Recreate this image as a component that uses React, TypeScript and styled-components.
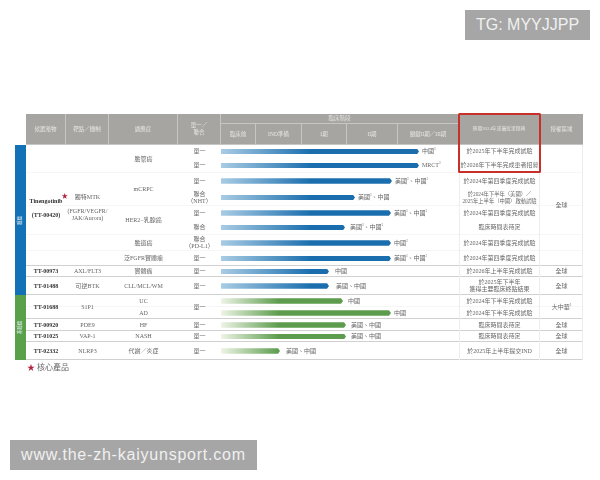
import styled, { createGlobalStyle } from "styled-components";

const GlobalStyle = createGlobalStyle`
  html, body {
    margin: 0;
    padding: 0;
    background: #fff;
  }
`;

const Page = styled.div`
  position: relative;
  width: 600px;
  height: 480px;
  overflow: hidden;
  padding: 114px 0 0 15px;
  box-sizing: border-box;
  font-family: "Liberation Serif", "Noto Sans CJK TC", serif;
  color: #666;
`;

const Blurred = styled.div`
  filter: blur(0.4px);
`;

const Table = styled.div`
  display: grid;
  width: 568px;
  grid-template-columns: 11px 40px 43px 69px 43px 35px 46px 45px 51px 61px 81px 43px;
  grid-template-rows: 10px 21px 13px 15px 16px 17px 14px 15px 16px 15px 11px 18px 12px 12px 12px 11px 18px;
  font-size: 6px;
  line-height: 6.8px;
`;

type PlaceProps = {
  $col: number;
  $row: number;
  $colSpan?: number;
  $rowSpan?: number;
};

const Cell = styled.div<PlaceProps>`
  grid-column: ${(p) => p.$col} / span ${(p) => p.$colSpan ?? 1};
  grid-row: ${(p) => p.$row} / span ${(p) => p.$rowSpan ?? 1};
  display: flex;
  flex-direction: column;
  align-items: center;
  justify-content: center;
  text-align: center;
  min-width: 0;
  white-space: nowrap;
  z-index: 1;
`;

const LeadCell = styled(Cell)`
  padding-top: 5px;
`;

const HeaderCell = styled(Cell)`
  background: #a6a5a2;
  color: #e6e6e4;
  font-size: 5.5px;
  border-right: 1px solid #c6c6c4;
  border-bottom: 1px solid #c6c6c4;
  box-sizing: border-box;
`;

const MilestoneHeader = styled(HeaderCell)`
  font-size: 4.8px;
`;

const HeaderEnd = styled(HeaderCell)`
  border-right: none;
`;

const Strip = styled(Cell)<{ $green?: boolean }>`
  background: ${(p) => (p.$green ? "#58a04a" : "#1272b5")};
  color: #dfeaf0;
  font-size: 4.5px;
`;

const StripLabel = styled.span`
  display: block;
  transform: rotate(-90deg);
`;

const DrugName = styled.div`
  position: relative;
  font-weight: 700;
  color: #333;
`;

const Gap = styled.div`
  height: 7px;
`;

const Star = styled.span`
  position: absolute;
  left: 100%;
  top: -6px;
  margin-left: -1px;
  color: #b3233c;
  font-size: 6.5px;
  line-height: 7px;
`;

const Sup = styled.sup`
  font-size: 3px;
  line-height: 0;
`;

const PlanLine = styled.div<{ $small?: boolean }>`
  font-size: ${(p) => (p.$small ? "5.3px" : "6px")};
`;

const BarCell = styled(Cell)`
  flex-direction: row;
  justify-content: flex-start;
`;

const Bar = styled.div<{ $green?: boolean; $width: number }>`
  width: ${(p) => p.$width}px;
  height: 5.5px;
  flex: none;
  clip-path: polygon(0 0, calc(100% - 2px) 0, 100% 50%, calc(100% - 2px) 100%, 0 100%);
  background: ${(p) =>
    p.$green
      ? "linear-gradient(90deg, #eef4e6 0, #5c9c4c 58px)"
      : "linear-gradient(90deg, #a9cce4 0, #1a6eae 90px)"};
`;

const BarLabel = styled.span<{ $gap?: number }>`
  margin-left: ${(p) => p.$gap ?? 3}px;
`;

const RowLine = styled.div<{ $row: number; $strong?: boolean }>`
  grid-column: 2 / span 11;
  grid-row: ${(p) => p.$row};
  align-self: end;
  height: ${(p) => (p.$strong ? "1.5px" : "1px")};
  background: ${(p) => (p.$strong ? "#d0d0d0" : "#f6f6f6")};
`;

const ColumnRule = styled.div`
  grid-column: 11;
  grid-row: 3 / span 15;
  border-left: 1px solid #ededed;
  border-right: 1px solid #ededed;
`;

const EdgeRule = styled.div`
  grid-column: 12;
  grid-row: 3 / span 15;
  border-right: 1px solid #ededed;
`;

const Highlight = styled.div`
  grid-column: 11;
  grid-row: 1 / span 4;
  margin: -1px -1px 0 -1px;
  border: 2px solid #c8302a;
  border-radius: 1.5px;
  z-index: 2;
`;

const Legend = styled.div`
  margin: 3px 0 0 12px;
  font-size: 8px;
  line-height: 10px;
  color: #666;
`;

const LegendStar = styled.span`
  color: #b3233c;
  margin-right: 2px;
`;

const Badge = styled.div`
  position: absolute;
  height: 30px;
  display: flex;
  align-items: center;
  justify-content: center;
  background: #a6a6a6;
  color: #f0f0f0;
  font-family: "Liberation Sans", Arial, sans-serif;
  font-size: 16px;
`;

const TgBadge = styled(Badge)`
  top: 10px;
  left: 465px;
  width: 125px;
`;

const SiteBadge = styled(Badge)`
  top: 440px;
  left: 10px;
  width: 247px;
  letter-spacing: 0.78px;
`;

const heads = [
  { col: 2, text: "候選藥物" },
  { col: 3, text: "靶點／機制" },
  { col: 4, text: "適應症" },
];

const phases = [
  { col: 6, text: "臨床前" },
  { col: 7, text: "IND準備" },
  { col: 8, text: "I期" },
  { col: 9, text: "II期" },
  { col: 10, text: "關鍵II期／III期" },
];

type Row = {
  mode: string[];
  bar: number;
  region: string;
  gap?: number;
  green?: boolean;
  small?: boolean;
  plan: string[];
};

const S = () => <Sup>3</Sup>;

const rows: (Row & { label?: React.ReactNode })[] = [
  { mode: ["單一"], bar: 198, region: "中國", label: <>中國<S /></>, plan: ["於2025年下半年完成試驗"] },
  { mode: ["單一"], bar: 198, region: "MRCT", label: <>MRCT<S /></>, plan: ["於2026年下半年完成患者招募"] },
  { mode: ["單一"], bar: 171, region: "", label: <>美國<S />、中國<S /></>, plan: ["於2024年第四季度完成試驗"] },
  { mode: ["聯合", "（NHT）"], bar: 134, region: "", label: <>美國<S />、中國</>, small: true, plan: ["於2024年下半年（美國）／", "2025年上半年（中國）啟動試驗"] },
  { mode: ["單一"], bar: 170, region: "", label: <>美國<S />、中國<S /></>, plan: ["於2024年第四季度完成試驗"] },
  { mode: ["聯合"], bar: 124, region: "", gap: 5, label: <>美國<S />、中國<S /></>, plan: ["臨床時間表待定"] },
  { mode: ["聯合", "（PD-L1）"], bar: 170, region: "", label: <>中國<S /></>, plan: ["於2024年第四季度完成試驗"] },
  { mode: ["單一"], bar: 170, region: "", label: <>美國<S />、中國<S /></>, plan: ["於2024年第四季度完成試驗"] },
  { mode: ["單一"], bar: 108, region: "中國", gap: 6, plan: ["於2026年上半年完成試驗"] },
  { mode: ["單一"], bar: 108, region: "美國、中國", gap: 7, plan: ["於2025年下半年", "獲得主要臨床終點結果"] },
  { mode: [], bar: 122, region: "中國", gap: 5, green: true, plan: ["於2024年下半年完成試驗"] },
  { mode: [], bar: 170, region: "中國", green: true, plan: ["於2024年下半年完成試驗"] },
  { mode: ["單一"], bar: 125, region: "美國、中國", gap: 5, green: true, plan: ["臨床時間表待定"] },
  { mode: ["單一"], bar: 125, region: "美國、中國", gap: 5, green: true, plan: ["臨床時間表待定"] },
  { mode: ["單一"], bar: 59, region: "美國、中國", gap: 6, green: true, plan: ["於2025年上半年提交IND"] },
];

const indications: { row: number; span: number; text: React.ReactNode }[] = [
  { row: 3, span: 2, text: <>膽管癌<S /></> },
  { row: 5, span: 2, text: "mCRPC" },
  { row: 7, span: 2, text: "HER2−乳腺癌" },
  { row: 9, span: 1, text: "膽道癌" },
  { row: 10, span: 1, text: "泛FGFR實體瘤" },
  { row: 11, span: 1, text: "實體瘤" },
  { row: 12, span: 1, text: "CLL/MCL/WM" },
  { row: 13, span: 1, text: "UC" },
  { row: 14, span: 1, text: "AD" },
  { row: 15, span: 1, text: "HF" },
  { row: 16, span: 1, text: "NASH" },
  { row: 17, span: 1, text: "代謝／炎症" },
];

const drugs = [
  { row: 11, span: 1, name: "TT-00973", target: "AXL/FLT3" },
  { row: 12, span: 1, name: "TT-01488", target: "可逆BTK" },
  { row: 13, span: 2, name: "TT-01688", target: "S1P1" },
  { row: 15, span: 1, name: "TT-00920", target: "PDE9" },
  { row: 16, span: 1, name: "TT-01025", target: "VAP-1" },
  { row: 17, span: 1, name: "TT-02332", target: "NLRP3" },
];

const rights = [
  { row: 3, span: 8, text: "全球" },
  { row: 11, span: 1, text: "全球" },
  { row: 12, span: 1, text: "全球" },
  { row: 15, span: 1, text: "全球" },
  { row: 16, span: 1, text: "全球" },
  { row: 17, span: 1, text: "全球" },
];

const strongRows = [10, 11, 12, 14, 15, 16, 17];
const faintRows = [4, 6, 8, 9, 13];

export default function App() {
  return (
    <Page>
      <GlobalStyle />
      <Blurred>
        <Table>
          {heads.map((h) => (
            <HeaderCell key={h.col} $col={h.col} $row={1} $rowSpan={2}>
              {h.text}
            </HeaderCell>
          ))}
          <HeaderCell $col={5} $row={1} $rowSpan={2}>
            <div>單一／</div>
            <div>聯合</div>
          </HeaderCell>
          <HeaderCell $col={6} $row={1} $colSpan={5}>
            臨床階段
          </HeaderCell>
          {phases.map((h) => (
            <HeaderCell key={h.col} $col={h.col} $row={2}>
              {h.text}
            </HeaderCell>
          ))}
          <MilestoneHeader $col={11} $row={1} $rowSpan={2}>
            預期2024年或最近里程碑
          </MilestoneHeader>
          <HeaderEnd $col={12} $row={1} $rowSpan={2}>
            授權區域
          </HeaderEnd>

          <Strip $col={1} $row={3} $rowSpan={10}>
            <StripLabel>腫瘤</StripLabel>
          </Strip>
          <Strip $col={1} $row={13} $rowSpan={5} $green>
            <StripLabel>非腫瘤</StripLabel>
          </Strip>

          <LeadCell $col={2} $row={3} $rowSpan={8}>
            <DrugName>
              Tinengotinib<Star>★</Star>
            </DrugName>
            <Gap />
            <DrugName>(TT-00420)</DrugName>
          </LeadCell>
          <LeadCell $col={3} $row={3} $rowSpan={8}>
            <div>獨特MTK</div>
            <Gap />
            <div>(FGFR/VEGFR/</div>
            <div>JAK/Aurora)</div>
          </LeadCell>

          {drugs.map((d) => (
            <Cell key={d.name} $col={2} $row={d.row} $rowSpan={d.span}>
              <DrugName>{d.name}</DrugName>
            </Cell>
          ))}
          {drugs.map((d) => (
            <Cell key={d.target} $col={3} $row={d.row} $rowSpan={d.span}>
              {d.target}
            </Cell>
          ))}
          {indications.map((d) => (
            <Cell key={d.row} $col={4} $row={d.row} $rowSpan={d.span}>
              {d.text}
            </Cell>
          ))}

          <Cell $col={5} $row={13} $rowSpan={2}>
            單一
          </Cell>
          {rows.map((r, i) => (
            <Cell key={`mode-${i}`} $col={5} $row={i + 3}>
              {r.mode.map((m) => (
                <div key={m}>{m}</div>
              ))}
            </Cell>
          ))}

          {rows.map((r, i) => (
            <BarCell key={`bar-${i}`} $col={6} $colSpan={5} $row={i + 3}>
              <Bar $width={r.bar} $green={r.green} />
              <BarLabel $gap={r.gap}>{r.label ?? r.region}</BarLabel>
            </BarCell>
          ))}

          {rows.map((r, i) => (
            <Cell key={`plan-${i}`} $col={11} $row={i + 3}>
              {r.plan.map((p) => (
                <PlanLine key={p} $small={r.small}>
                  {p}
                </PlanLine>
              ))}
            </Cell>
          ))}

          {rights.map((d) => (
            <Cell key={d.row} $col={12} $row={d.row} $rowSpan={d.span}>
              {d.text}
            </Cell>
          ))}
          <Cell $col={12} $row={13} $rowSpan={2}>
            <span>
              大中華<Sup>3</Sup>
            </span>
          </Cell>

          {faintRows.map((r) => (
            <RowLine key={r} $row={r} />
          ))}
          {strongRows.map((r) => (
            <RowLine key={r} $row={r} $strong />
          ))}
          <ColumnRule />
          <EdgeRule />
          <Highlight />
        </Table>
        <Legend>
          <LegendStar>★</LegendStar>核心產品
        </Legend>
      </Blurred>
      <TgBadge>TG: MYYJJPP</TgBadge>
      <SiteBadge>www.the-zh-kaiyunsport.com</SiteBadge>
    </Page>
  );
}
